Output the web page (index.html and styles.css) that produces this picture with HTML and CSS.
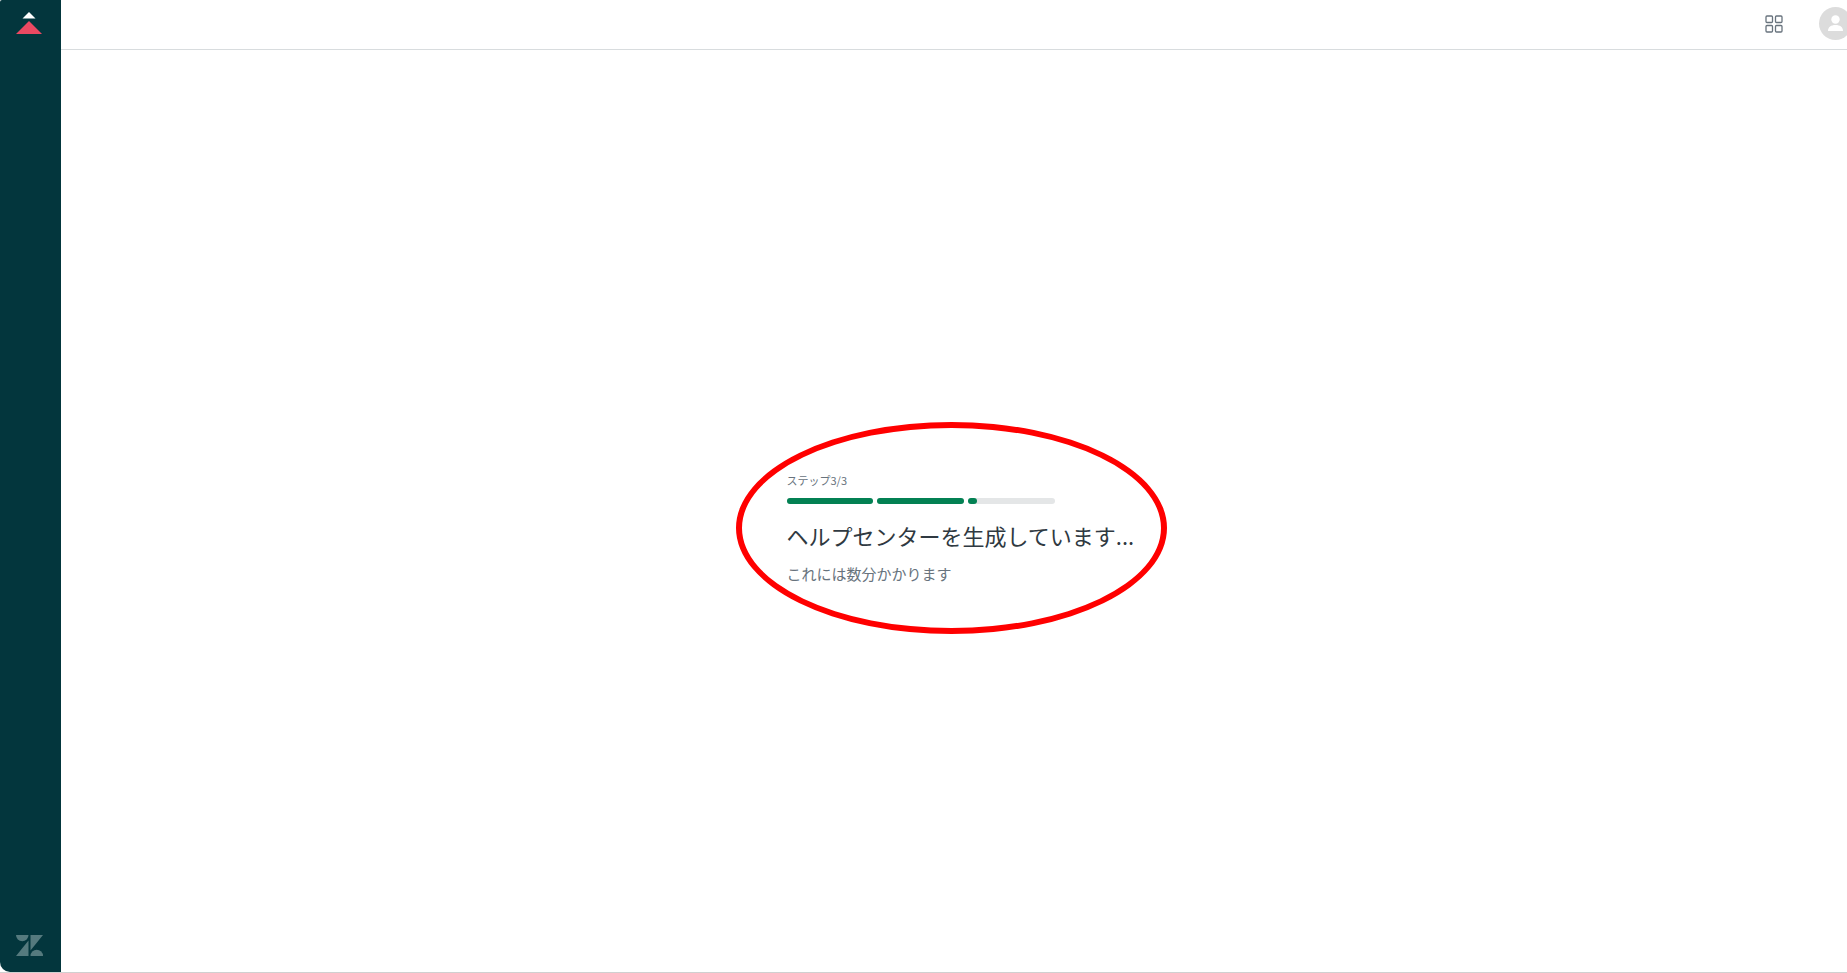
FILE: index.html
```
<!DOCTYPE html>
<html lang="ja">
<head>
    <meta charset="UTF-8">
    <meta name="viewport" content="width=device-width, initial-scale=1.0">
    <title>ヘルプセンター</title>
    <link rel="stylesheet" href="styles.css">
</head>
<body>
    <nav class="sidebar">
        <a class="logo" href="#" aria-label="ホーム">
            <svg width="26" height="22" viewBox="0 0 26 22">
                <path fill="#fff" d="M13 0 L19.500 6.500 H6.500 Z"/>
                <path fill="#eb4962" d="M13 9 L26 22 H0 Z"/>
            </svg>
        </a>
        <a class="logo" href="#" aria-label="Zendesk">
            <svg width="27" height="21" viewBox="0 0 27 21" fill="#557a7e">
                <path d="M0 0 H12.500 A6.250 6.250 0 0 1 0 0 Z"/>
                <path d="M12.500 5.500 V21 H0 Z"/>
                <path d="M14.500 0 H27 L14.500 15.500 Z"/>
                <path d="M14.500 21 A6.250 6.250 0 0 1 27 21 Z"/>
            </svg>
        </a>
    </nav>
    <div class="page">
        <header class="topbar">
            <button class="icon-btn" aria-label="製品">
                <svg width="18" height="18" viewBox="0 0 18 18" fill="none" stroke="#68737d" stroke-width="1.300">
                    <rect x="1" y="1" width="6.500" height="6.500" rx="1"/>
                    <rect x="10.500" y="1" width="6.500" height="6.500" rx="1"/>
                    <rect x="1" y="10.500" width="6.500" height="6.500" rx="1"/>
                    <rect x="10.500" y="10.500" width="6.500" height="6.500" rx="1"/>
                </svg>
            </button>
            <button class="icon-btn" aria-label="プロフィール">
                <svg width="33" height="33" viewBox="0 0 33 33">
                    <circle cx="16.500" cy="16.500" r="16.500" fill="#dcdcdc"/>
                    <circle cx="16.500" cy="12.500" r="4.200" fill="#fff"/>
                    <path fill="#fff" d="M9 24 C9 20 12 18 16.500 18 S24 20 24 24 Z"/>
                </svg>
            </button>
        </header>
        <main class="content">
            <section class="setup">
                <p class="step">ステップ3/3</p>
                <div class="progress" role="progressbar" aria-label="ステップ" aria-valuemin="0" aria-valuemax="3" aria-valuenow="2">
                    <div class="bar"><div class="fill" style="width: 100%"></div></div>
                    <div class="bar"><div class="fill" style="width: 100%"></div></div>
                    <div class="bar"><div class="fill" style="width: 10%"></div></div>
                </div>
                <h1 class="title">ヘルプセンターを生成しています...</h1>
                <p class="note">これには数分かかります</p>
            </section>
        </main>
    </div>
</body>
</html>
```
FILE: styles.css
```
* {
    margin: 0;
    padding: 0;
    box-sizing: border-box;
}

body {
    min-height: 100vh;
    display: flex;
    background-color: #fff;
    border-bottom: 1px solid #d0d0d0;
    font-family: "Noto Sans CJK JP", sans-serif;
}

.sidebar {
    width: 61px;
    padding: 12px 3px 16px 0;
    background-color: #03363d;
    border-radius: 2px 0 0 10px;
    display: flex;
    flex-direction: column;
    justify-content: space-between;
    align-items: center;
}

.logo {
    display: flex;
}

.page {
    flex: 1;
    display: flex;
    flex-direction: column;
    overflow: hidden;
}

.topbar {
    height: 50px;
    padding-bottom: 2px;
    border-bottom: 1px solid #d8dcde;
    display: flex;
    justify-content: flex-end;
    align-items: center;
    gap: 36px;
}

.icon-btn {
    display: flex;
    background: none;
    border: 0;
    cursor: pointer;
}

/* the avatar runs past the right edge */
.icon-btn:last-child {
    margin-right: -5px;
}

.content {
    flex: 1;
    padding: 34px 6px 0 0;
    display: flex;
    justify-content: center;
    align-items: center;
}

.setup {
    width: 431px;
    height: 212px;
    padding-left: 45px;
    border: 6px solid #f00;
    border-radius: 50%;
    display: flex;
    flex-direction: column;
    justify-content: center;
    white-space: nowrap;
}

.step {
    font-size: 11px;
    line-height: 16px;
    color: #68737d;
}

.progress {
    width: 268px;
    margin: 10px 0 15px;
    display: flex;
    gap: 4px;
}

.bar {
    flex: 1;
    height: 6px;
    border-radius: 3px;
    background-color: #e4e6e7;
}

.fill {
    height: 100%;
    border-radius: 3px;
    background-color: #038153;
}

.title {
    font-size: 22px;
    font-weight: 400;
    line-height: 32px;
    color: #2f3941;
}

.note {
    margin-top: 13px;
    font-size: 15px;
    line-height: 20px;
    color: #68737d;
}
```
